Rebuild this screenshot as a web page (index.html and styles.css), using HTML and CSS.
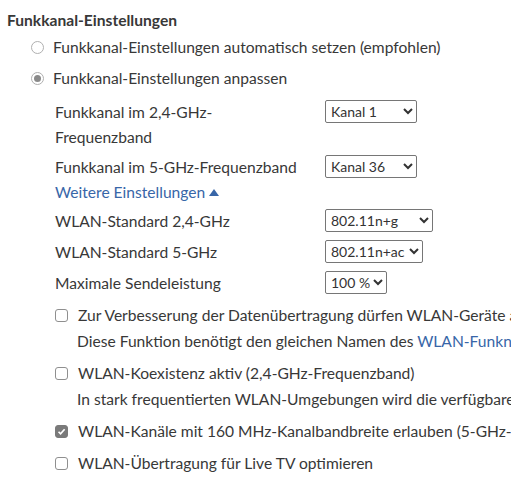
FILE: index.html
```html
<!DOCTYPE html>
<html lang="de">
<head>
<meta charset="utf-8">
<link rel="stylesheet" href="styles.css">
</head>
<body>
<div class="page">
  <h3 class="title">Funkkanal-Einstellungen</h3>
  <div class="radios">
    <label class="radio-row"><span class="radio"></span>Funkkanal-Einstellungen automatisch setzen (empfohlen)</label>
    <label class="radio-row"><span class="radio checked"></span>Funkkanal-Einstellungen anpassen</label>
  </div>
  <div class="settings">
    <div class="row first">
      <div class="label">Funkkanal im 2,4-GHz-<br>Frequenzband</div>
      <select class="sel w-kanal"><option>Kanal 1</option></select>
    </div>
    <div class="row">
      <div class="label">Funkkanal im 5-GHz-Frequenzband</div>
      <select class="sel w-kanal"><option>Kanal 36</option></select>
    </div>
    <a class="more" href="#">Weitere Einstellungen <span class="tri"></span></a>
    <div class="row">
      <div class="label">WLAN-Standard 2,4-GHz</div>
      <select class="sel w-std24"><option>802.11n+g</option></select>
    </div>
    <div class="row gap">
      <div class="label">WLAN-Standard 5-GHz</div>
      <select class="sel w-std5"><option>802.11n+ac</option></select>
    </div>
    <div class="row gap">
      <div class="label">Maximale Sendeleistung</div>
      <select class="sel w-pow"><option>100 %</option></select>
    </div>
    <div class="checks">
      <div class="check-item">
        <div class="check-row"><span class="cb"></span>Zur Verbesserung der Datenübertragung dürfen WLAN-Geräte auch andere WLAN-Funknetze nutzen</div>
        <div class="desc">Diese Funktion benötigt den gleichen Namen des <a href="#">WLAN-Funknetzes</a> in allen Frequenzbändern.</div>
      </div>
      <div class="check-item">
        <div class="check-row"><span class="cb"></span>WLAN-Koexistenz aktiv (2,4-GHz-Frequenzband)</div>
        <div class="desc">In stark frequentierten WLAN-Umgebungen wird die verfügbare Kanalbandbreite automatisch reduziert.</div>
      </div>
      <div class="check-item">
        <div class="check-row"><span class="cb checked"><svg width="13" height="13" viewBox="0 0 13 13"><path d="M3 6.8 L5.4 9.2 L10.2 3.8" fill="none" stroke="#fff" stroke-width="2"/></svg></span>WLAN-Kanäle mit 160 MHz-Kanalbandbreite erlauben (5-GHz-Frequenzband)</div>
      </div>
      <div class="check-item">
        <div class="check-row"><span class="cb"></span>WLAN-Übertragung für Live TV optimieren</div>
      </div>
    </div>
  </div>
</div>
</body>
</html>
```
FILE: styles.css
```css
html, body {
  margin: 0;
  padding: 0;
  overflow: hidden;
  background: #fff;
}
body {
  font-family: Lato, "Liberation Sans", sans-serif;
  font-size: 15.6px;
  color: #383838;
}
.page {
  padding: 8px 0 0 7px;
  white-space: nowrap;
}
.title {
  margin: 0;
  font-size: 15.6px;
  font-weight: bold;
  line-height: 25px;
}
.radios {
  margin: 2px 0 0 24px;
  display: flex;
  flex-direction: column;
  gap: 6px;
}
.radio-row {
  display: flex;
  align-items: center;
  line-height: 25px;
}
.radio {
  width: 11px;
  height: 11px;
  border: 1px solid #b0b0b0;
  border-radius: 50%;
  margin-right: 9px;
  position: relative;
  box-sizing: content-box;
}
.radio.checked::after {
  content: "";
  position: absolute;
  left: 2px;
  top: 2px;
  width: 7px;
  height: 7px;
  border-radius: 50%;
  background: #8a8a8a;
}
.settings {
  margin: 9px 0 0 48px;
}
.row {
  display: flex;
  align-items: flex-start;
  margin-top: 5px;
}
.row.first {
  margin-top: 0;
}
.row.gap {
  margin-top: 6px;
}
.label {
  width: 270px;
  line-height: 25px;
}
.sel {
  margin: 0;
  height: 23px;
  font-family: inherit;
  font-size: 14px;
  color: #333;
  background: #fff;
  border: 1px solid #767676;
  border-radius: 2px;
  padding: 0 0 0 1px;
}
.w-kanal { width: 92px; }
.w-std24 { width: 108px; }
.w-std5 { width: 98px; }
.w-pow { width: 62px; }
.more {
  display: inline-flex;
  align-items: center;
  gap: 4px;
  line-height: 24px;
  margin-top: 0;
  color: #3866a8;
  text-decoration: none;
}
.tri {
  width: 0;
  height: 0;
  border-left: 5px solid transparent;
  border-right: 5px solid transparent;
  border-bottom: 7px solid #3866a8;
}
.checks {
  margin-top: 6px;
  display: flex;
  flex-direction: column;
  gap: 6px;
}
.check-row, .desc {
  line-height: 26px;
}
.check-row {
  display: flex;
  align-items: center;
}
.desc {
  padding-left: 22px;
}
.desc a {
  color: #3866a8;
  text-decoration: none;
}
.cb {
  width: 11px;
  height: 11px;
  border: 1px solid #8f8f8f;
  border-radius: 3px;
  margin-right: 10px;
  flex: none;
  display: flex;
  align-items: center;
  justify-content: center;
}
.cb.checked {
  background: #7a7a7a;
  border-color: #7a7a7a;
}
.cb svg {
  display: block;
}
```
